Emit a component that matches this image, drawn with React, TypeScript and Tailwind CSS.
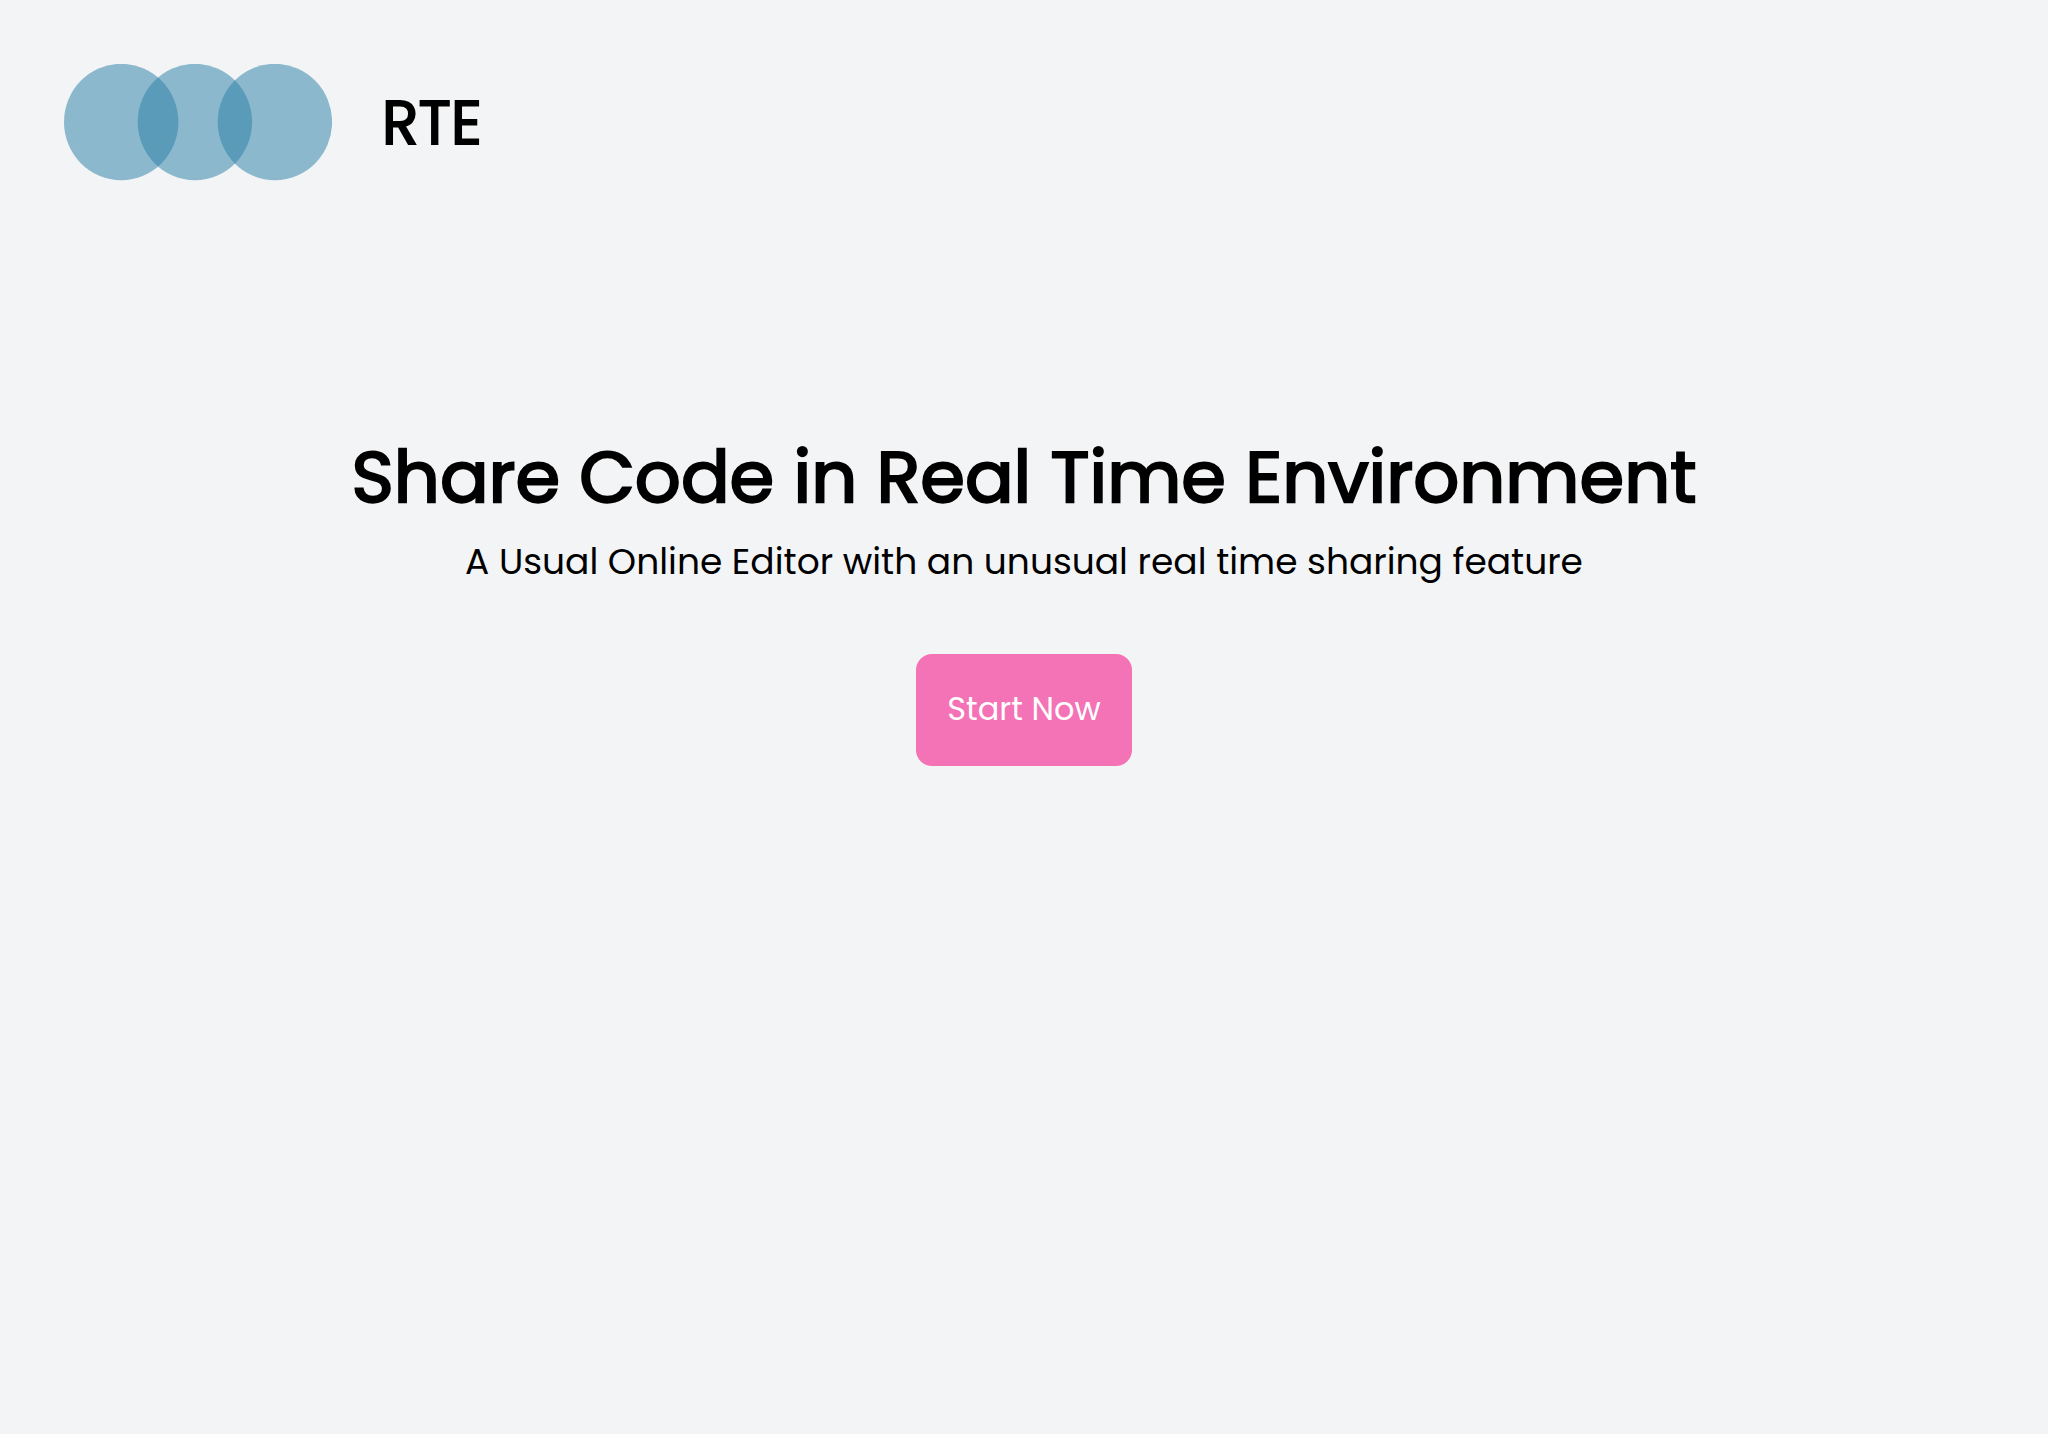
function Logo() {
  return (
    <svg width="268" height="117" viewBox="0 0 268 117" fill="#2f82a8" fillOpacity="0.53" aria-hidden="true">
      <ellipse cx="57.2" cy="58" rx="57.2" ry="58.2" />
      <ellipse cx="130.9" cy="58" rx="57.2" ry="58.2" />
      <ellipse cx="210.9" cy="58" rx="57.2" ry="58.2" />
    </svg>
  );
}

export default function App() {
  return (
    <div className="flex min-h-screen flex-col bg-[#f3f4f6] font-['Poppins','Inter',sans-serif] text-black">
      <header className="flex h-[245px] items-center gap-[50px] px-16">
        <Logo />
        <span className="text-[60px] leading-[60px] [-webkit-text-stroke:1.9px_black]">RTE</span>
      </header>
      <main className="flex flex-col items-center pt-[187px]">
        <h1 className="text-[72px] leading-[90px] whitespace-nowrap [-webkit-text-stroke:2.25px_black]">
          Share Code in Real Time Environment
        </h1>
        <p className="mt-[13px] text-[36px] leading-[54px] whitespace-nowrap">
          A Usual Online Editor with an unusual real time sharing feature
        </p>
        <button className="mt-[65px] h-28 w-[216px] rounded-2xl bg-[#f472b6] pb-[2px] text-[32px] text-white">Start Now</button>
      </main>
    </div>
  );
}
